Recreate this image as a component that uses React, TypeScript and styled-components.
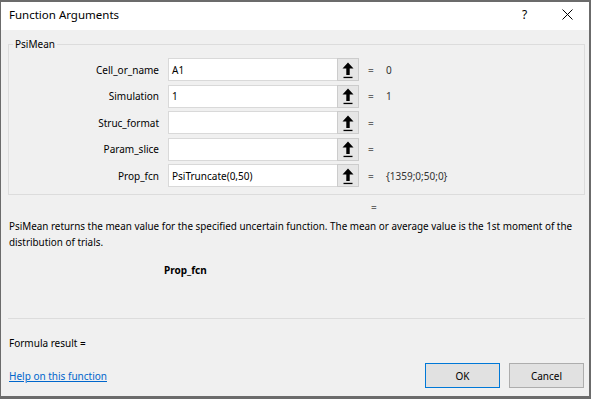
import React from "react";
import styled, { createGlobalStyle } from "styled-components";

const Global = createGlobalStyle`
  html, body { margin: 0; padding: 0; }
  body {
    width: 591px; height: 399px; overflow: hidden;
    background: #6b6b6b;
    font-family: "Noto Sans", "Open Sans", sans-serif;
  }
`;

const Screen = styled.div`
  width: 591px;
  height: 399px;
  padding: 2px 2px 3px 1px;
  box-sizing: border-box;
`;

const Dialog = styled.div`
  height: 100%;
  background: #f0f0f0;
  display: flex;
  flex-direction: column;
  font-size: 10px;
  color: #000;
`;

const TitleBar = styled.div`
  height: 28px;
  box-sizing: border-box;
  padding-bottom: 3px;
  background: #fff;
  display: flex;
  align-items: center;
  padding-left: 8px;
`;

const Title = styled.div`
  flex: 1;
  font-size: 11.5px;
`;

const TitleBtn = styled.div`
  width: 43px;
  height: 25px;
  display: flex;
  align-items: center;
  justify-content: center;
  font-size: 12px;
`;

const Body = styled.div`
  flex: 1;
  display: flex;
  flex-direction: column;
  padding: 8px 4px 0 7px;
`;

const Group = styled.fieldset`
  margin: 0;
  border: 1px solid #dcdcdc;
  padding: 8px 0 7px 0;
  display: flex;
  flex-direction: column;
  gap: 3.5px;
`;

const Legend = styled.legend`
  padding: 0 2px;
  margin-left: 4px;
  font-size: 10px;
  line-height: 12px;
  color: #000;
`;

const Row = styled.div`
  display: flex;
  align-items: center;
  height: 23px;
`;

const Label = styled.div`
  width: 150px;
  text-align: right;
  padding-right: 9px;
`;

const Input = styled.div`
  width: 169px;
  height: 23px;
  box-sizing: border-box;
  background: #fff;
  border: 1px solid #d9d9d9;
  border-right: none;
  display: flex;
  align-items: center;
  padding-left: 3px;
`;

const RefBtn = styled.div`
  width: 22px;
  height: 23px;
  box-sizing: border-box;
  background: #e6e6e6;
  border: 1px solid #cccccc;
  display: flex;
  align-items: center;
  justify-content: center;
`;

const Eq = styled.div`
  width: 18px;
  margin-left: 9px;
  color: #666;
`;

const Value = styled.div`
  color: #333;
`;

const LoneEq = styled.div`
  margin-top: 5px;
  line-height: 14px;
  padding-left: 363px;
  color: #666;
`;

const Desc = styled.div`
  margin-top: 4px;
  line-height: 16px;
  padding-left: 1px;
  font-size: 9.9px;
`;

const ArgName = styled.div`
  margin-top: 13px;
  line-height: 14px;
  padding-left: 156px;
  font-weight: bold;
`;

const Sep = styled.div`
  margin-top: 41px;
  border-top: 1px solid #dcdcdc;
`;

const Result = styled.div`
  margin-top: 17px;
  line-height: 14px;
  padding-left: 1px;
`;

const Footer = styled.div`
  margin-top: 13px;
  display: flex;
  align-items: center;
`;

const Help = styled.a`
  flex: 1;
  padding-left: 1px;
  color: #0066cc;
  text-decoration: underline;
  cursor: pointer;
`;

const Button = styled.div<{ $primary?: boolean }>`
  width: 75px;
  height: 25px;
  box-sizing: border-box;
  background: #e1e1e1;
  border: 1px solid ${(p) => (p.$primary ? "#0078d7" : "#adadad")};
  display: flex;
  align-items: center;
  justify-content: center;
  margin-left: 9px;
  &:last-child { margin-right: 1px; }
`;

const UpArrow = () => (
  <svg width="14" height="18" viewBox="0 0 14 18">
    <path d="M7 1.5 L12.5 7.5 L8.7 7.5 L8.7 14 L5.3 14 L5.3 7.5 L1.5 7.5 Z" fill="#000" />
    <rect x="2.5" y="15.8" width="9" height="1.3" fill="#000" />
  </svg>
);

const CloseIcon = () => (
  <svg width="11" height="11" viewBox="0 0 11 11">
    <path d="M0.5 0.5 L10.5 10.5 M10.5 0.5 L0.5 10.5" stroke="#000" strokeWidth="1" />
  </svg>
);

const args = [
  { name: "Cell_or_name", value: "A1", result: "0" },
  { name: "Simulation", value: "1", result: "1" },
  { name: "Struc_format", value: "", result: "" },
  { name: "Param_slice", value: "", result: "" },
  { name: "Prop_fcn", value: "PsiTruncate(0,50)", result: "{1359;0;50;0}" },
];

export default function App() {
  return (
    <>
      <Global />
      <Screen>
        <Dialog>
          <TitleBar>
            <Title>Function Arguments</Title>
            <TitleBtn>?</TitleBtn>
            <TitleBtn>
              <CloseIcon />
            </TitleBtn>
          </TitleBar>
          <Body>
            <Group>
              <Legend>PsiMean</Legend>
              {args.map((a) => (
                <Row key={a.name}>
                  <Label>{a.name}</Label>
                  <Input>{a.value}</Input>
                  <RefBtn>
                    <UpArrow />
                  </RefBtn>
                  <Eq>=</Eq>
                  <Value>{a.result}</Value>
                </Row>
              ))}
            </Group>
            <LoneEq>=</LoneEq>
            <Desc>
              PsiMean returns the mean value for the specified uncertain function. The mean or average value is the 1st moment of the distribution of trials.
            </Desc>
            <ArgName>Prop_fcn</ArgName>
            <Sep />
            <Result>Formula result =</Result>
            <Footer>
              <Help>Help on this function</Help>
              <Button $primary>OK</Button>
              <Button>Cancel</Button>
            </Footer>
          </Body>
        </Dialog>
      </Screen>
    </>
  );
}
